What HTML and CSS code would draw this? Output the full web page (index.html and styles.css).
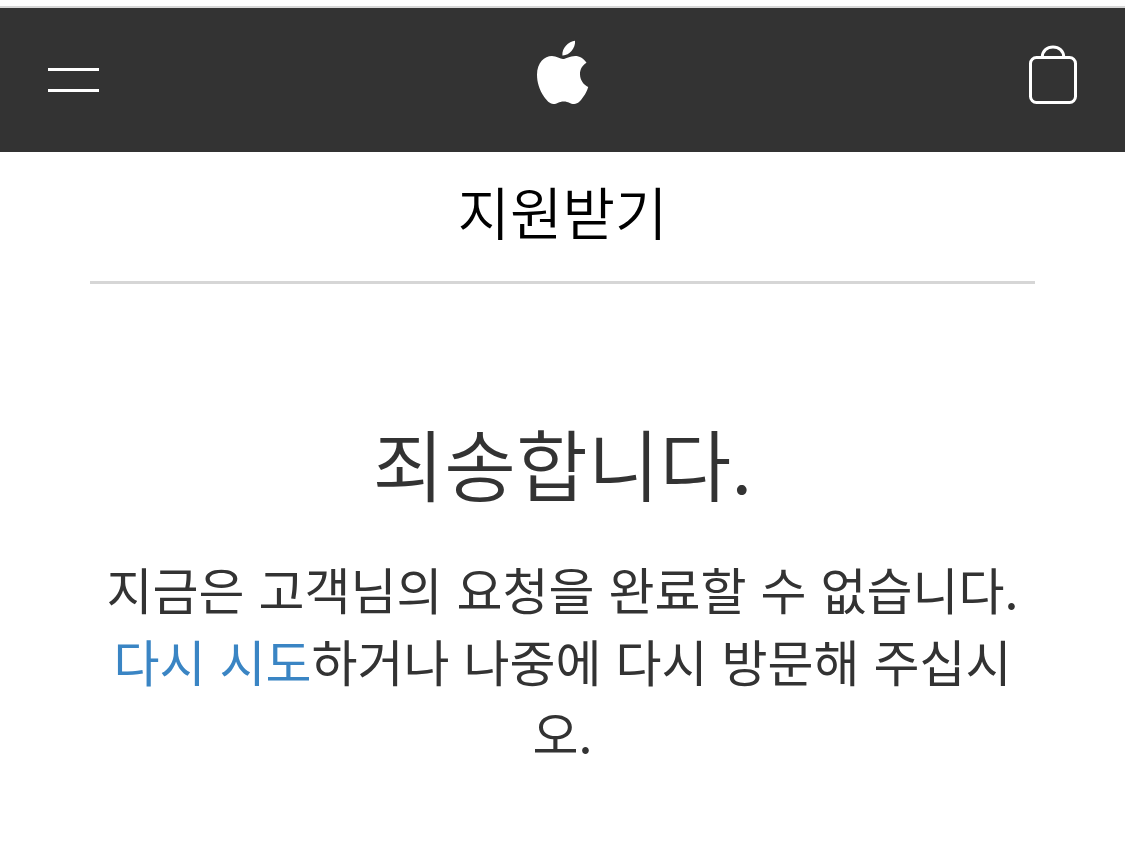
FILE: index.html
```html
<!DOCTYPE html>
<html lang="ko">
<head>
<meta charset="utf-8">
<meta name="viewport" content="width=device-width, initial-scale=1">
<title>지원받기</title>
<link rel="stylesheet" href="styles.css">
</head>
<body>
<header class="topbar">
  <button class="icon-button" type="button" aria-label="메뉴">
    <svg width="51" height="64" viewBox="0 0 51 64" aria-hidden="true"><path d="M0 28h51v3H0zM0 49h51v3H0z" fill="#fff"/></svg>
  </button>
  <a class="logo" href="#" aria-label="Apple">
    <svg width="53" height="64" viewBox="-1 0 53 64" aria-hidden="true">
      <path fill="#fff" d="M38 .8C38.500 4.500 36.800 8.300 34.500 11C32.200 13.700 28.800 15.600 25.400 15.400C25 11.800 26.700 8.200 28.900 5.800C31.300 3.100 35.100 1.100 38 .8ZM49.500 22.700C45.300 25.200 43 29.300 43 34C43 39.800 46.300 44.800 51.200 46.900C50.300 50.200 48.500 53.600 46.500 56.600C43.600 60.800 41.200 64 37.200 64C33 64 31.700 61.400 26.700 61.400C21.800 61.400 20.300 64 16.400 64C12.500 64 9.700 60.600 6.900 56.600C2.500 50.200 0 42.300 0 34.800C0 22.700 7.500 16.100 14.900 16.100C19.400 16.100 23.200 19 26 19C28.700 19 33 15.900 38.200 15.900C42.500 15.900 46.900 18.300 49.500 22.700Z"/>
    </svg>
  </a>
  <a class="bag" href="#" aria-label="장바구니">
    <svg width="48" height="64" viewBox="0 0 48 64" fill="none" stroke="#fff" stroke-width="3" aria-hidden="true"><rect x="1.500" y="17.500" width="45" height="45" rx="6"/><path d="M13.200 17C13.500 11 18 6.900 24 6.900S34.500 11 34.800 17"/></svg>
  </a>
</header>
<main class="page">
  <h1 class="page-title">지원받기</h1>
  <section class="message">
    <h2 class="message-title">죄송합니다.</h2>
    <p class="message-text">지금은 고객님의 요청을 완료할 수 없습니다. <a class="retry" href="#">다시 시도</a>하거나 나중에 다시 방문해 주십시오.</p>
  </section>
</main>
</body>
</html>
```
FILE: styles.css
```css
body {
  margin: 0;
  border-top: 6px solid #fdfdfd;
  background: #fff;
  color: #333;
  font-family: "Noto Sans CJK KR", sans-serif;
}

.topbar {
  display: grid;
  grid-template-columns: 1fr auto 1fr;
  align-items: center;
  box-sizing: border-box;
  height: 146px;
  padding: 0 48px 16px;
  border-top: 2px solid #d6d6d6;
  background: #333;
}

.topbar svg {
  display: block;
}

.icon-button {
  justify-self: start;
  padding: 0;
  border: 0;
  background: none;
}

.bag {
  justify-self: end;
}

.page {
  padding: 0 90px;
  text-align: center;
}

.page-title,
.message-title {
  margin: 0;
  font-family: "Noto Sans CJK KR DemiLight", "Noto Sans CJK KR", sans-serif;
  font-weight: 300;
}

.page-title {
  padding: 18px 0 31px;
  border-bottom: 3px solid #d6d6d6;
  color: #000;
  font-size: 57px;
  line-height: 80px;
}

.message {
  padding-top: 128px;
}

.message-title {
  font-size: 78px;
  line-height: 100px;
}

.message-text {
  margin: 40px 0 0;
  font-size: 50px;
  font-weight: 400;
  line-height: 72px;
}

.retry {
  color: #3a85c4;
  text-decoration: none;
}
```
